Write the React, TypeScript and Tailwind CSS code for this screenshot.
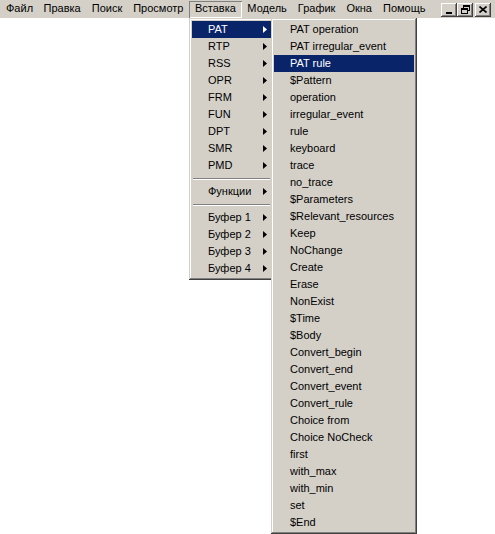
import React from "react"

const bar = ["Файл", "Правка", "Поиск", "Просмотр", "Вставка", "Модель", "График", "Окна", "Помощь"]

const insertItems: (string | null)[] = [
  "PAT", "RTP", "RSS", "OPR", "FRM", "FUN", "DPT", "SMR", "PMD",
  null,
  "Функции",
  null,
  "Буфер 1", "Буфер 2", "Буфер 3", "Буфер 4",
]

const patItems = [
  "PAT operation", "PAT irregular_event", "PAT rule", "$Pattern", "operation", "irregular_event",
  "rule", "keyboard", "trace", "no_trace", "$Parameters", "$Relevant_resources", "Keep",
  "NoChange", "Create", "Erase", "NonExist", "$Time", "$Body", "Convert_begin", "Convert_end",
  "Convert_event", "Convert_rule", "Choice from", "Choice NoCheck", "first", "with_max",
  "with_min", "set", "$End",
]

const Arrow = ({ white }: { white?: boolean }) => (
  <svg width="4" height="7" viewBox="0 0 4 7" className="mr-[4px] shrink-0">
    <path d="M0 0 L4 3.5 L0 7 Z" fill={white ? "#fff" : "#000"} />
  </svg>
)

const WinButton = ({ children, className = "" }: { children: React.ReactNode; className?: string }) => (
  <div className={`w-[16px] h-[14px] bg-[#d4d0c8] flex items-center justify-center shadow-[inset_-1px_-1px_#404040,inset_1px_1px_#fff,inset_-2px_-2px_#808080] ${className}`}>
    {children}
  </div>
)

const Separator = () => (
  <div className="h-[9px] flex items-center px-[1px]">
    <div className="w-full border-t border-t-[#808080] border-b border-b-white" />
  </div>
)

export default function App() {
  return (
    <div className="relative w-[495px] h-[534px] bg-white overflow-hidden text-[11px] text-black font-['Liberation_Sans',Arial,sans-serif]">
      {/* menu bar */}
      <div className="flex items-center h-[18px] bg-[#d4d0c8]">
        {bar.map((name, i) => (
          <div
            key={name}
            className={
              name === "Вставка"
                ? "h-[17px] mt-[1px] px-[6px] leading-[15px] shadow-[inset_1px_1px_#808080,inset_-1px_-1px_#fff]"
                : i === 0
                  ? "h-[17px] mt-[1px] pl-[6px] pr-[5px] leading-[15px]"
                  : "h-[17px] mt-[1px] px-[5.5px] leading-[15px]"
            }
          >
            {name}
          </div>
        ))}
        <div className="flex-1" />
        <div className="flex items-center mr-[4px] mt-[1px]">
          <WinButton>
            <svg width="8" height="8" viewBox="0 0 8 8">
              <rect x="1" y="6" width="6" height="2" fill="#000" />
            </svg>
          </WinButton>
          <WinButton>
            <svg width="9" height="9" viewBox="0 0 9 9">
              <rect x="2.5" y="0.5" width="6" height="5" fill="none" stroke="#000" />
              <rect x="2" y="0" width="7" height="2" fill="#000" />
              <rect x="0.5" y="3.5" width="6" height="5" fill="#d4d0c8" stroke="#000" />
              <rect x="0" y="3" width="7" height="2" fill="#000" />
            </svg>
          </WinButton>
          <WinButton className="ml-[2px]">
            <svg width="8" height="7" viewBox="0 0 8 7">
              <path d="M0.5 0.5 L7.5 6.5 M7.5 0.5 L0.5 6.5" stroke="#000" strokeWidth="1.6" />
            </svg>
          </WinButton>
        </div>
      </div>

      {/* Вставка dropdown */}
      <div className="absolute left-[189px] top-[18px] w-[85px] p-[3px] bg-[#d4d0c8] shadow-[inset_-1px_-1px_#404040,inset_1px_1px_#d4d0c8,inset_-2px_-2px_#808080,inset_2px_2px_#fff]">
        {insertItems.map((item, i) =>
          item === null ? (
            <Separator key={i} />
          ) : (
            <div
              key={i}
              className={`h-[17px] flex items-center pl-[16px] ${item === "PAT" ? "bg-[#0a246a] text-white" : ""}`}
            >
              <span className="flex-1 leading-[17px]">{item}</span>
              <Arrow white={item === "PAT"} />
            </div>
          )
        )}
      </div>

      {/* PAT submenu */}
      <div className="absolute left-[271px] top-[18px] w-[146px] p-[3px] bg-[#d4d0c8] shadow-[inset_-1px_-1px_#404040,inset_1px_1px_#d4d0c8,inset_-2px_-2px_#808080,inset_2px_2px_#fff]">
        {patItems.map((item) => (
          <div
            key={item}
            className={`h-[17px] leading-[17px] pl-[16px] ${item === "PAT rule" ? "bg-[#0a246a] text-white" : ""}`}
          >
            {item}
          </div>
        ))}
      </div>
    </div>
  )
}
